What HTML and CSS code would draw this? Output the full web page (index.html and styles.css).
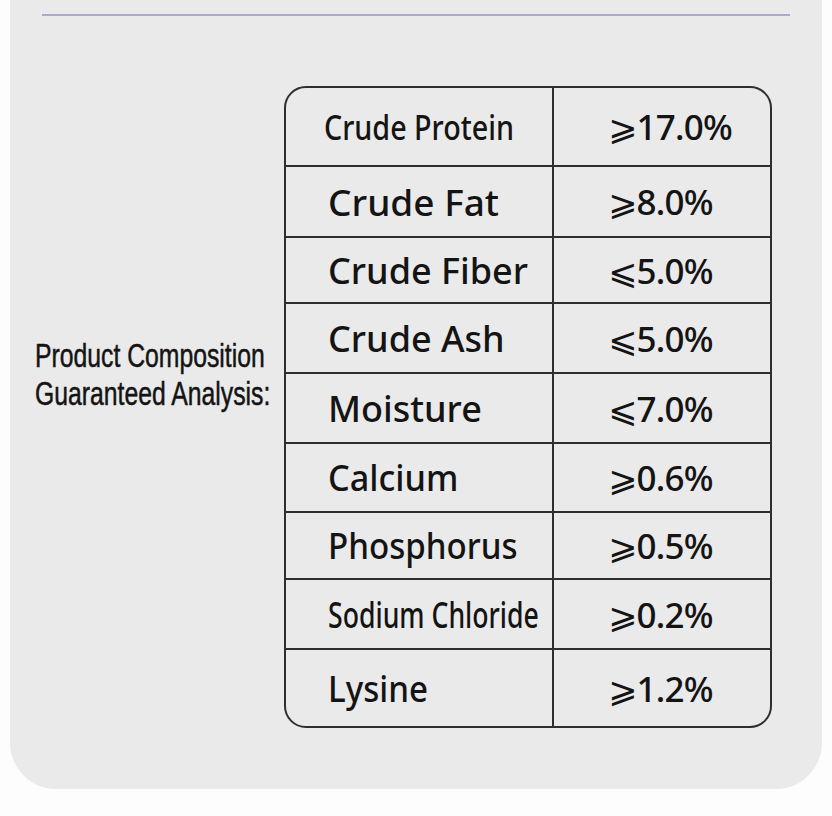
FILE: index.html
```html
<!DOCTYPE html>
<html lang="en">
<head>
<meta charset="utf-8">
<title>Guaranteed Analysis</title>
<link rel="stylesheet" href="styles.css">
</head>
<body>
<div class="card">
  <div class="rule"></div>
  <div class="content">
    <div class="label">
      <div class="lbl">Product Composition<br>Guaranteed Analysis:</div>
    </div>
    <div class="table">
      <div class="cell name first"><span class="t sx82">Crude Protein</span></div><div class="cell val">⩾17.0%</div>
      <div class="cell name"><span class="t big">Crude Fat</span></div><div class="cell val">⩾8.0%</div>
      <div class="cell name"><span class="t">Crude Fiber</span></div><div class="cell val">⩽5.0%</div>
      <div class="cell name"><span class="t">Crude Ash</span></div><div class="cell val">⩽5.0%</div>
      <div class="cell name"><span class="t">Moisture</span></div><div class="cell val">⩽7.0%</div>
      <div class="cell name"><span class="t sx95">Calcium</span></div><div class="cell val">⩾0.6%</div>
      <div class="cell name"><span class="t sx92">Phosphorus</span></div><div class="cell val">⩾0.5%</div>
      <div class="cell name"><span class="t sx74">Sodium Chloride</span></div><div class="cell val">⩾0.2%</div>
      <div class="cell name last"><span class="t sx92">Lysine</span></div><div class="cell val last">⩾1.2%</div>
    </div>
  </div>
</div>
</body>
</html>
```
FILE: styles.css
```css
html, body {
  margin: 0;
  padding: 0;
}
body {
  background: #fdfdfd;
  width: 832px;
  height: 816px;
  font-family: "Noto Sans", "DejaVu Sans", sans-serif;
  color: #141414;
}
.card {
  margin: 0 10px;
  height: 789px;
  background: #eaeaea;
  border-radius: 0 0 46px 46px;
  padding-top: 14px;
  box-sizing: border-box;
}
.rule {
  margin: 0 32px;
  height: 2px;
  background: #aca8cf;
}
.content {
  display: flex;
  margin-top: 70px;
}
.label {
  width: 274px;
  flex: none;
  padding-left: 25px;
  box-sizing: border-box;
  margin-top: 251px;
}
.lbl {
  font-family: "Liberation Sans", "Noto Sans", sans-serif;
  font-size: 33px;
  line-height: 37.5px;
  white-space: nowrap;
  -webkit-text-stroke: 0.5px #141414;
  transform: scaleX(0.75);
  transform-origin: left center;
}
.table {
  width: 488px;
  flex: none;
  box-sizing: border-box;
  border: 2px solid #2e2e2e;
  border-radius: 22px;
  overflow: hidden;
  display: grid;
  grid-template-columns: 268px 1fr;
  grid-template-rows: 79px 71px 66px 70px 70px 69px 67px 70px 76px;
}
.cell {
  box-sizing: border-box;
  border-bottom: 2px solid #2e2e2e;
  display: flex;
  align-items: center;
  white-space: nowrap;
  font-weight: 500;
}
.cell.last {
  border-bottom: none;
}
.name {
  border-right: 2px solid #2e2e2e;
  padding-left: 42px;
  font-size: 36px;
}
.name.first {
  padding-left: 38px;
}
.val {
  padding-left: 54px;
  font-size: 35px;
  letter-spacing: -0.8px;
}
.t {
  display: inline-block;
  transform-origin: left center;
}
.big { font-size: 37px; }
.sx82 { transform: scaleX(0.82); font-size: 35px; }
.sx95 { transform: scaleX(0.95); }
.sx92 { transform: scaleX(0.92); }
.sx74 { transform: scaleX(0.74); }
```
